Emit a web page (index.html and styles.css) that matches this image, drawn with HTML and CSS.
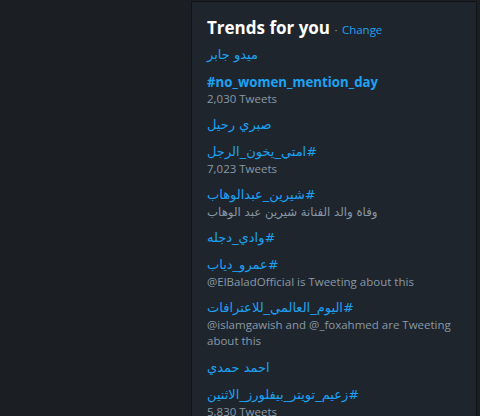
FILE: index.html
```html
<!DOCTYPE html>
<html lang="en">
<head>
<meta charset="utf-8">
<title>Trends for you</title>
<link rel="stylesheet" href="styles.css">
</head>
<body>
<div class="page">
  <div class="gutter"></div>
  <aside class="trends">
    <h2 class="trends-title">Trends for you <span class="dot">·</span> <a class="change">Change</a></h2>
    <ul class="trend-list">
      <li class="trend"><a class="trend-name ar" dir="rtl">ميدو جابر</a></li>
      <li class="trend"><a class="trend-name">#no_women_mention_day</a><div class="trend-meta">2,030 Tweets</div></li>
      <li class="trend"><a class="trend-name ar" dir="rtl">صبري رحيل</a></li>
      <li class="trend"><a class="trend-name ar" dir="rtl">#امتي_يخون_الرجل</a><div class="trend-meta">7,023 Tweets</div></li>
      <li class="trend"><a class="trend-name ar" dir="rtl">#شيرين_عبدالوهاب</a><div class="trend-meta ar" dir="rtl">وفاة والد الفنانة شيرين عبد الوهاب</div></li>
      <li class="trend"><a class="trend-name ar" dir="rtl">#وادي_دجله</a></li>
      <li class="trend"><a class="trend-name ar" dir="rtl">#عمرو_دياب</a><div class="trend-meta">@ElBaladOfficial is Tweeting about this</div></li>
      <li class="trend"><a class="trend-name ar" dir="rtl">#اليوم_العالمي_للاعترافات</a><div class="trend-meta">@islamgawish and @_foxahmed are Tweeting about this</div></li>
      <li class="trend"><a class="trend-name ar" dir="rtl">احمد حمدي</a></li>
      <li class="trend"><a class="trend-name ar" dir="rtl">#زعيم_تويتر_بيفلورز_الاثنين</a><div class="trend-meta">5,830 Tweets</div></li>
    </ul>
  </aside>
</div>
</body>
</html>
```
FILE: styles.css
```css
html, body {
  margin: 0;
  padding: 0;
  height: 100%;
  background: #1b1f24;
  overflow: hidden;
}
.page {
  display: flex;
  align-items: flex-start;
  height: 100%;
  font-family: "Open Sans", "DejaVu Sans", sans-serif;
}
.gutter {
  width: 191px;
  flex: none;
}
.trends {
  width: 254px;
  flex: none;
  margin-top: 1px;
  min-height: 600px;
  background: #1f252d;
  border: 1px solid #0f1216;
  padding: 14px 15px 0 15px;
}
.trends-title {
  margin: 0;
  font-size: 17px;
  line-height: 24px;
  font-weight: 700;
  color: #ffffff;
  white-space: nowrap;
}
.dot {
  font-size: 11.5px;
  font-weight: 400;
  color: #8899a6;
}
.change {
  font-size: 11.5px;
  font-weight: 400;
  color: #1da1f2;
}
.trend-list {
  list-style: none;
  margin: -1px 0 0 0;
  padding: 0;
}
.trend {
  padding: 5px 0 4px 0;
}
.trend:nth-last-child(2) {
  padding-top: 6px;
}
.trend-name {
  display: block;
  text-align: left;
  font-size: 13.25px;
  line-height: 18px;
  font-weight: 700;
  color: #1da1f2;
}
.trend-name.ar {
  font-family: "DejaVu Sans", sans-serif;
  font-size: 13px;
  font-weight: 400;
}
.trend-meta {
  text-align: left;
  font-size: 11.5px;
  line-height: 16px;
  color: #8899a6;
}
.trend-meta.ar {
  font-family: "DejaVu Sans", sans-serif;
  font-size: 11.75px;
  font-weight: 400;
}
```
